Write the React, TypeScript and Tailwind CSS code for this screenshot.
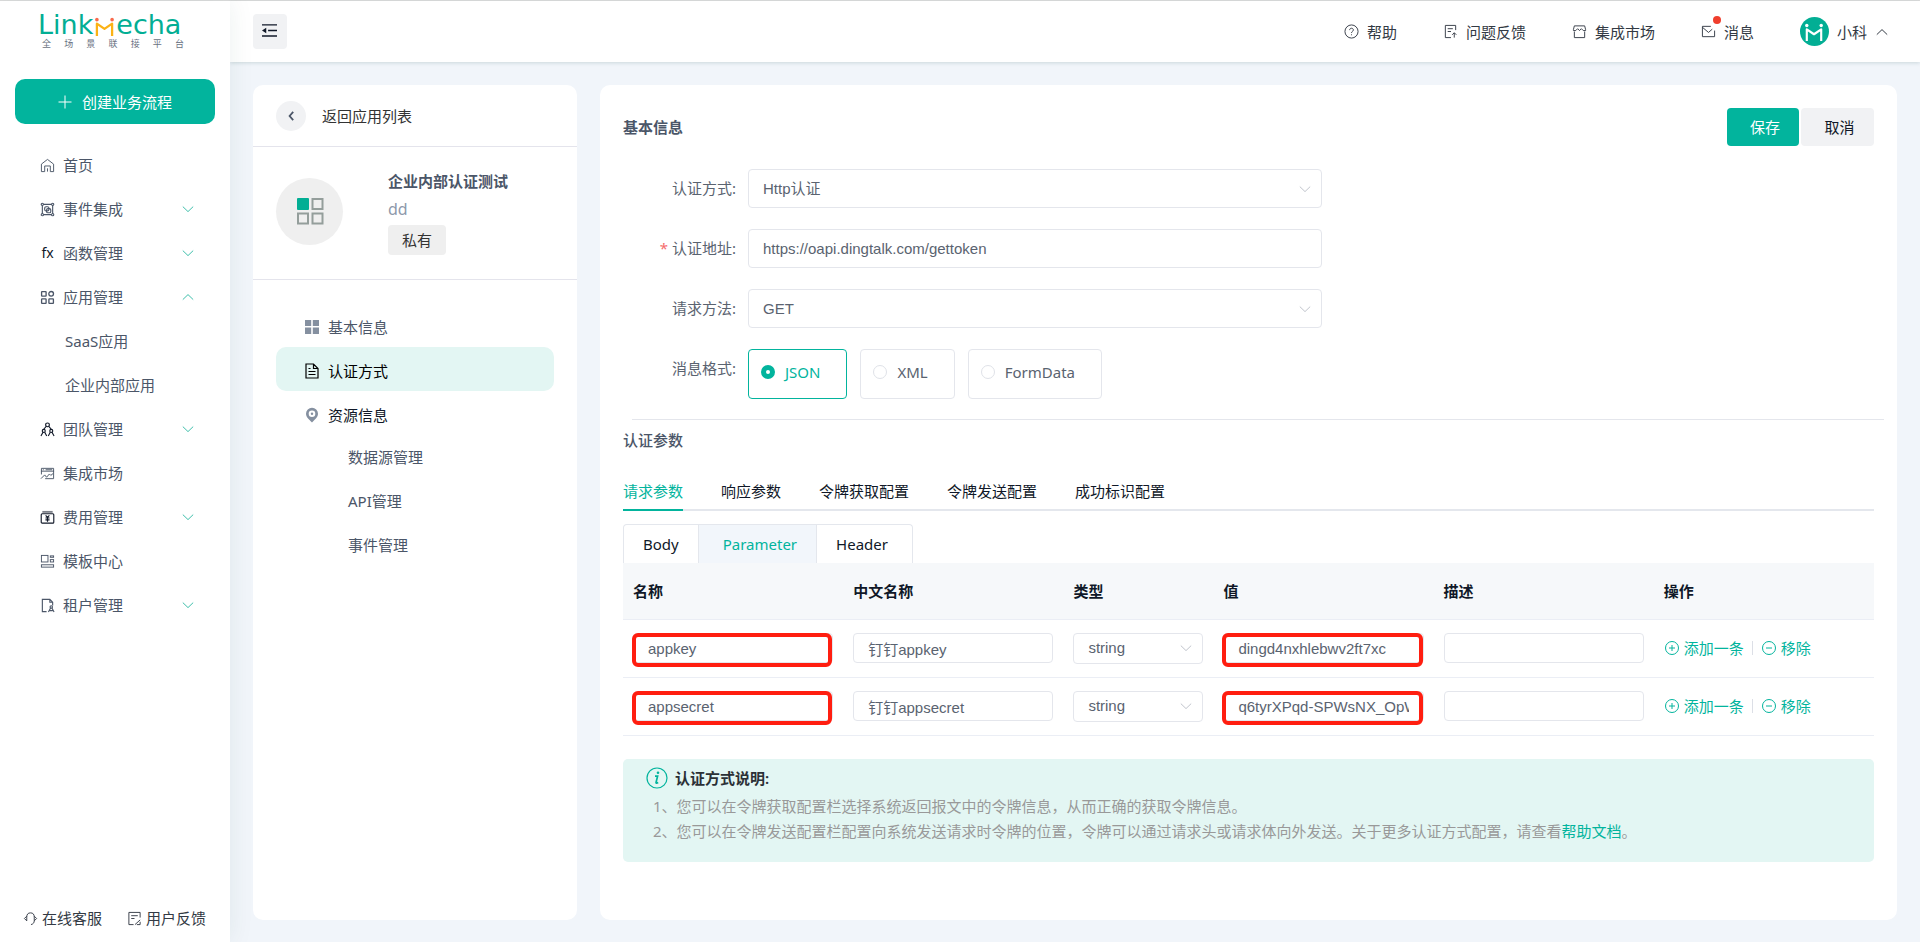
import React, { useState } from 'react';

interface IconProps {
  className?: string;
}

interface MenuItem {
  label: string;
  icon: React.FC<IconProps>;
  state?: 'open' | 'closed';
  dark?: boolean;
  children?: string[];
}

interface ParamRow {
  name: string;
  title: string;
  type: string;
  value: string;
  desc: string;
}

/* ---------- icons ---------- */

const Icon: React.FC<IconProps & { children: React.ReactNode; width?: number }> = ({
  className = 'size-[15px]',
  width = 1,
  children,
}) => (
  <svg viewBox="0 0 16 16" fill="none" stroke="currentColor" strokeWidth={width} className={`shrink-0 ${className}`} aria-hidden="true">
    {children}
  </svg>
);

const Chevron: React.FC<IconProps & { up?: boolean }> = ({ className = 'size-3', up }) => (
  <svg viewBox="0 0 12 12" fill="none" stroke="currentColor" className={`shrink-0 ${className}`} aria-hidden="true">
    <path d={up ? 'M.8 8.6 6 3.6l5.2 5' : 'M.8 3.600l5.200 5 5.200-5'} />
  </svg>
);

const HomeIcon: React.FC<IconProps> = (p) => (
  <Icon {...p}>
    <path d="M1.500 6.500 8 1.500l6.500 5v8h-3.500v-6H5v6H1.500zM8 11v3.500" />
  </Icon>
);

const EventIcon: React.FC<IconProps> = (p) => (
  <Icon {...p} width={1.2}>
    <path d="M2.500 3.500v9M13.500 3.500v9M3.500 2.500h9M3.500 13.500h9" />
    <circle cx="2.500" cy="2.500" r="1.200" />
    <circle cx="13.500" cy="2.500" r="1.200" />
    <circle cx="2.500" cy="13.500" r="1.200" />
    <circle cx="13.500" cy="13.500" r="1.200" />
    <rect x="5" y="5" width="4.500" height="4.500" rx="1.500" />
    <rect x="7" y="7" width="4.500" height="4.500" rx="1.500" />
  </Icon>
);

const FxIcon: React.FC<IconProps> = () => (
  <span className="w-[15px] shrink-0 text-center font-['Noto_Sans',sans-serif] text-sm leading-4 text-gray-900">fx</span>
);

const AppsIcon: React.FC<IconProps> = (p) => (
  <Icon {...p} width={1.4}>
    <rect x="1.700" y="1.700" width="4.800" height="4.800" rx=".5" />
    <rect x="1.700" y="9.500" width="4.800" height="4.800" rx=".5" />
    <rect x="9.500" y="9.500" width="4.800" height="4.800" rx=".5" />
    <circle cx="11.900" cy="4.100" r="2.500" />
  </Icon>
);

const TeamIcon: React.FC<IconProps> = (p) => (
  <Icon {...p} width={1.2}>
    <circle cx="8" cy="3" r="2" />
    <circle cx="4" cy="9.500" r="1.600" />
    <circle cx="12" cy="9.500" r="1.600" />
    <path d="M6.600 4.600 3.800 8M9.400 4.600l2.800 3.400M1 15l2.200-4M7.200 15 5 11M8.800 15l2.200-4M15 15l-2.200-4" />
  </Icon>
);

const MarketIcon: React.FC<IconProps> = (p) => (
  <Icon {...p}>
    <path d="M1.500 9V2.500h13v11h-9M1 5.500h14M3 4h1M6 4h7M1 13.500l4-4 2 2.500 3-3.500 1.500 1.500L14 8" />
  </Icon>
);

const FeeIcon: React.FC<IconProps> = (p) => (
  <Icon {...p} width={1.2}>
    <path d="M2.500 2h11" strokeWidth="2" opacity=".55" />
    <rect x="1.300" y="4" width="13.400" height="10" rx="1" />
    <path d="M6 5.800 8 8l2-2.200M8 8v4.500M5.800 8.500h4.400M5.800 10.500h4.400" />
  </Icon>
);

const TemplateIcon: React.FC<IconProps> = (p) => (
  <Icon {...p}>
    <rect x="1.500" y="1.500" width="7" height="7" />
    <rect x="11" y="2" width="3.500" height="1.500" />
    <rect x="11" y="6" width="3.500" height="2.500" />
    <rect x="1.500" y="11.500" width="13" height="2.500" />
  </Icon>
);

const TenantIcon: React.FC<IconProps> = (p) => (
  <Icon {...p} width={1.2}>
    <path d="M7 14.500H2.500v-13h8l3 3V8M10.500 1.500v3h3" />
    <circle cx="12" cy="9.500" r="1.300" />
    <path d="M9 15l2.300-4.300M15 15l-2.300-4.300M10.500 13.500h3" />
  </Icon>
);

const HeadsetIcon: React.FC<IconProps> = (p) => (
  <Icon {...p}>
    <path d="M4 10.500v-4a4 4.500 0 0 1 8 0v4c0 2-1.200 3.500-3.500 4M4 5.500 1.500 8 4 10.500M12 5.500 14.500 8 12 10.500" />
  </Icon>
);

const FeedbackIcon: React.FC<IconProps> = (p) => (
  <Icon {...p}>
    <path d="M14 7V1.500H2v13h5M4.500 5h7M4.500 8H8M8.500 14.500l5.500-5M10.500 14.500H14v-3" />
  </Icon>
);

const HelpIcon: React.FC<IconProps> = (p) => (
  <Icon {...p}>
    <circle cx="8" cy="8" r="7" />
    <path d="M6 6.500C6 5.300 6.900 4.500 8 4.500s2 .8 2 1.900C10 7.800 8 7.900 8 9.500M8 11v1" />
  </Icon>
);

const IssueIcon: React.FC<IconProps> = (p) => (
  <Icon {...p}>
    <path d="M13.500 6.500v-5h-11v13h6M5 5h5.500M5 8h3.500M12 14.500v-5M9.800 11.500 12 9.300l2.200 2.200" />
  </Icon>
);

const ShopIcon: React.FC<IconProps> = (p) => (
  <Icon {...p}>
    <path d="M2.500 8v6.500h11V8M1.500 6l1-4h11l1 4v1h-2.500l-2-2-2 2-2-2-2 2H1.500z" />
  </Icon>
);

const MailIcon: React.FC<IconProps> = (p) => (
  <Icon {...p}>
    <path d="M10.500 2.500h-9v11h13V7M1.500 3.500 8 9l4-3.500" />
  </Icon>
);

const FoldIcon: React.FC<IconProps> = (p) => (
  <svg viewBox="0 0 18 16" className={p.className} fill="none" stroke="currentColor" strokeWidth="1.500" aria-hidden="true">
    <path d="M1 2h16M7.500 8H17M1 13.800h16" />
    <path d="M1 8l4.500-3v6z" fill="currentColor" stroke="none" />
  </svg>
);

const GridIcon: React.FC<IconProps> = (p) => (
  <svg viewBox="0 0 16 16" fill="#8590a0" className={p.className} aria-hidden="true">
    <path d="M1 1h6.200v6H1zM8.800 1H15v6H8.800zM1 8.600h6.200V15H1zM8.800 8.600H15V15H8.800z" />
  </svg>
);

const DocIcon: React.FC<IconProps> = (p) => (
  <Icon {...p} width={1.2}>
    <path d="M2 1h7.500L14 5.500V15H2zM9.500 1v4.500H14M4.500 5.500h2M4.500 8.500h7M4.500 11.500h7" />
  </Icon>
);

const PinIcon: React.FC<IconProps> = (p) => (
  <svg viewBox="0 0 16 16" className={p.className} aria-hidden="true">
    <path d="M8 15.500C4.500 12 2 9.800 2 6.800a6 6 0 0 1 12 0c0 3-2.500 5.200-6 8.700z" fill="#8590a0" />
    <circle cx="8" cy="6.800" r="3.300" fill="#fff" />
    <circle cx="8" cy="6.800" r="1.200" fill="#8590a0" />
  </svg>
);

/* Brand mark: two figures joining hands */
const BrandMark: React.FC<IconProps & { body: string; head: string }> = ({ className, body, head }) => (
  <svg viewBox="0 0 20 20" className={className} fill="none" aria-hidden="true">
    <path d="M2 20V7l8 5.500L18 7v13" stroke={body} strokeWidth="2.400" strokeLinejoin="round" />
    <circle cx="2" cy="2.800" r="1.900" fill={head} />
    <circle cx="18" cy="2.800" r="1.900" fill={head} />
  </svg>
);

/* ---------- data ---------- */

const menu: MenuItem[] = [
  { label: '首页', icon: HomeIcon },
  { label: '事件集成', icon: EventIcon, state: 'closed' },
  { label: '函数管理', icon: FxIcon, state: 'closed' },
  { label: '应用管理', icon: AppsIcon, state: 'open', children: ['SaaS应用', '企业内部应用'] },
  { label: '团队管理', icon: TeamIcon, state: 'closed', dark: true },
  { label: '集成市场', icon: MarketIcon },
  { label: '费用管理', icon: FeeIcon, state: 'closed', dark: true },
  { label: '模板中心', icon: TemplateIcon },
  { label: '租户管理', icon: TenantIcon, state: 'closed' },
];

const paramTabs = ['请求参数', '响应参数', '令牌获取配置', '令牌发送配置', '成功标识配置'];
const columns = ['名称', '中文名称', '类型', '值', '描述', '操作'];

const initialRows: ParamRow[] = [
  { name: 'appkey', title: '钉钉appkey', type: 'string', value: 'dingd4nxhlebwv2ft7xc', desc: '' },
  { name: 'appsecret', title: '钉钉appsecret', type: 'string', value: 'q6tyrXPqd-SPWsNX_OpW', desc: '' },
];

/* ---------- pieces ---------- */

const Logo = () => (
  <div className="mr-10 ml-[38px] flex flex-col">
    <div className="flex items-end font-['DejaVu_Sans',sans-serif] text-[27px] leading-6 text-[#02ae94]">
      <span>Link</span>
      <BrandMark className="mx-0.5 mb-px size-[19px]" body="#fbb215" head="#f96a4c" />
      <span>echa</span>
    </div>
    <div className="mt-px flex justify-between pr-1.5 pl-1 text-[9px] leading-3 text-gray-500">
      {'全场景联接平台'.split('').map((c) => (
        <span key={c}>{c}</span>
      ))}
    </div>
  </div>
);

const Sidebar = () => (
  <aside className="relative z-10 flex w-[230px] shrink-0 flex-col bg-white pt-3 shadow-[0_0_24px_rgba(0,80,70,0.08)]">
    <Logo />
    <button
      type="button"
      className="mx-[15px] mt-[29px] flex h-[45px] items-center justify-center gap-2.5 rounded-[10px] bg-[#02b49d] text-white"
    >
      <svg viewBox="0 0 14 14" className="size-3.5" stroke="currentColor" aria-hidden="true">
        <path d="M7 .5v13M.5 7h13" />
      </svg>
      创建业务流程
    </button>

    <nav className="mt-[19px] text-[#4b5668]">
      {menu.map((item) => (
        <div key={item.label}>
          <a href="#" className="flex h-11 items-center gap-2 pr-9 pl-10">
            <item.icon className={item.dark ? 'size-[15px] text-gray-900' : 'size-[15px]'} />
            <span className="flex-1">{item.label}</span>
            {item.state && <Chevron up={item.state === 'open'} className="size-3 text-[#3fbfab]" />}
          </a>
          {item.children?.map((child) => (
            <a key={child} href="#" className="flex h-11 items-center pl-[65px]">
              {child}
            </a>
          ))}
        </div>
      ))}
    </nav>

    <div className="mt-auto flex gap-[25px] pb-3 pl-[23px] text-[#333a44]">
      <a href="#" className="flex items-center gap-1">
        <HeadsetIcon />
        在线客服
      </a>
      <a href="#" className="flex items-center gap-1">
        <FeedbackIcon />
        用户反馈
      </a>
    </div>
  </aside>
);

const Header = () => (
  <header className="relative flex h-[61px] shrink-0 items-center bg-white pr-8 pl-[23px] text-[#333a44] shadow-[0_1px_4px_rgba(0,60,60,0.16)]">
    <button type="button" aria-label="收起菜单" className="flex h-[35px] w-[34px] items-center justify-center rounded-sm bg-[#f1f2f4] pr-0.5 pb-0.5 text-gray-900">
      <FoldIcon className="h-[15px] w-[17px]" />
    </button>
    <nav className="ml-auto flex items-center gap-[46px]">
      <a href="#" className="flex items-center gap-2">
        <HelpIcon />
        帮助
      </a>
      <a href="#" className="flex items-center gap-2">
        <IssueIcon />
        问题反馈
      </a>
      <a href="#" className="flex items-center gap-2">
        <ShopIcon />
        集成市场
      </a>
      <a href="#" className="relative flex items-center gap-2">
        <MailIcon />
        消息
        <span className="absolute -top-1 left-3 size-2 rounded-full bg-[#f03e2d]" />
      </a>
      <button type="button" className="flex items-center gap-2">
        <span className="flex size-[29px] items-center justify-center rounded-full bg-[#02ae94]">
          <BrandMark className="size-[18px]" body="#fff" head="#fff" />
        </span>
        小科
        <Chevron up className="ml-px size-3" />
      </button>
    </nav>
  </header>
);

const AppPanel = () => (
  <section className="w-[324px] shrink-0 rounded-[10px] bg-white">
    <div className="flex h-[62px] items-center gap-4 border-b border-[#e4e4ec] px-[23px] text-[#333]">
      <button type="button" aria-label="返回" className="flex size-[30px] items-center justify-center rounded-full bg-[#f1f2f4] text-[#4b5668]">
        <svg viewBox="0 0 10 10" className="size-2.5" fill="none" stroke="currentColor" strokeWidth="1.800" aria-hidden="true">
          <path d="M7.200 .8 3.600 5l3.600 4.200" />
        </svg>
      </button>
      返回应用列表
    </div>

    <div className="flex h-[133px] items-center gap-[45px] border-b border-[#e4e4ec] px-[23px] pb-1">
      <div className="flex size-[67px] items-center justify-center rounded-full bg-[#efefef]">
        <svg viewBox="0 0 28 28" className="size-7" fill="none" stroke="#949e9b" strokeWidth="2" aria-hidden="true">
          <rect x="1" y="1" width="12" height="12" rx="1" fill="#02ae94" stroke="none" />
          <rect x="16.500" y="2" width="10" height="10" />
          <rect x="2" y="16.500" width="10" height="10" />
          <rect x="16.500" y="16.500" width="10" height="10" />
        </svg>
      </div>
      <div className="flex flex-col items-start">
        <h2 className="mb-0.5 leading-7 font-bold text-[#4b5668]">企业内部认证测试</h2>
        <p className="text-base leading-6 text-[#8d99ab]">dd</p>
        <span className="mt-1 flex h-[30px] items-center rounded bg-[#efefef] px-3.5 text-[#333]">私有</span>
      </div>
    </div>

    <nav className="px-[23px] pt-[23px] text-[#4b5668]">
      <a href="#" className="flex h-11 items-center gap-2 pt-1 pl-7">
        <GridIcon className="size-4" />
        基本信息
      </a>
      <a href="#" className="flex h-11 items-center gap-2 rounded-[10px] bg-[#e3f6f3] pt-1 pl-7 text-black">
        <DocIcon className="size-4" />
        认证方式
      </a>
      <a href="#" className="flex h-11 items-center gap-2 pt-1 pl-7 text-gray-900">
        <PinIcon className="size-4" />
        资源信息
      </a>
      {['数据源管理', 'API管理', '事件管理'].map((label) => (
        <a key={label} href="#" className="flex h-11 items-center pl-[72px]">
          {label}
        </a>
      ))}
    </nav>
  </section>
);

const FieldLabel: React.FC<{ htmlFor?: string; required?: boolean; children: React.ReactNode }> = ({ htmlFor, required, children }) => (
  <label htmlFor={htmlFor} className="w-[125px] shrink-0 pr-3 text-right leading-[39px] text-[#5a6370]">
    {required && <span className="mr-1 text-[#f56c6c]">*</span>}
    {children}:
  </label>
);

const controlClass =
  "w-full appearance-none rounded border border-[#e4e6ec] bg-white px-3.5 font-['Liberation_Sans','Noto_Sans_CJK_SC',sans-serif] text-[#5a6370] outline-none";

const SelectBox: React.FC<{ id?: string; label?: string; options: string[]; small?: boolean }> = ({ id, label, options, small }) => (
  <div className="relative w-full">
    <select id={id} aria-label={label} className={`${controlClass} block ${small ? 'h-[31px]' : 'h-[39px]'}`}>
      {options.map((o) => (
        <option key={o}>{o}</option>
      ))}
    </select>
    <Chevron className="pointer-events-none absolute top-1/2 right-[11px] size-3 -translate-y-1/2 text-[#c0c4cc]" />
  </div>
);

const Marked: React.FC<{ children: React.ReactNode }> = ({ children }) => (
  <div className="relative">
    {children}
    <span className="pointer-events-none absolute -left-px right-px top-0 -bottom-1 rounded-md border-4 border-[#ff1e10]" />
  </div>
);

const AuthPanel = () => {
  const [format, setFormat] = useState('JSON');
  const [tab, setTab] = useState('请求参数');
  const [part, setPart] = useState('Parameter');
  const [rows, setRows] = useState<ParamRow[]>(initialRows);

  const update = (i: number, patch: Partial<ParamRow>) => {
    setRows(rows.map((r, n) => (n === i ? { ...r, ...patch } : r)));
  };

  const addRow = (i: number) => {
    const next = [...rows];
    next.splice(i + 1, 0, { name: '', title: '', type: 'string', value: '', desc: '' });
    setRows(next);
  };

  const cellInput = `${controlClass} block h-[30px]`;

  return (
    <section className="min-w-0 flex-1 rounded-[10px] bg-white px-[23px] pt-[23px]">
      <div className="flex items-start justify-between">
        <h2 className="leading-[38px] font-semibold text-[#4b5668]">基本信息</h2>
        <div className="flex gap-0.5">
          <button type="button" className="h-[38px] w-[72px] rounded bg-[#02b49d] pl-1 text-white">保存</button>
          <button type="button" className="h-[38px] w-[73px] rounded bg-[#f1f2f4] pl-1 text-gray-900">取消</button>
        </div>
      </div>

      <form className="mt-[23px] flex w-[699px] max-w-full flex-col gap-[21px]">
        <div className="flex">
          <FieldLabel htmlFor="auth-type">认证方式</FieldLabel>
          <SelectBox id="auth-type" options={['Http认证']} />
        </div>
        <div className="flex">
          <FieldLabel htmlFor="auth-url" required>认证地址</FieldLabel>
          <input id="auth-url" type="text" defaultValue="https://oapi.dingtalk.com/gettoken" className={`${controlClass} h-[39px]`} />
        </div>
        <div className="flex">
          <FieldLabel htmlFor="auth-method">请求方法</FieldLabel>
          <SelectBox id="auth-method" options={['GET', 'POST']} />
        </div>
        <div className="flex" role="radiogroup" aria-label="消息格式">
          <FieldLabel>消息格式</FieldLabel>
          <div className="flex gap-[13px]">
            {['JSON', 'XML', 'FormData'].map((f) => (
              <label
                key={f}
                className={`flex h-[50px] items-center gap-2.5 rounded border pr-[26px] pb-1 pl-3 ${
                  format === f ? 'border-[#02b49d] text-[#02b49d]' : 'border-[#e4e6ec] text-[#5a6370]'
                }`}
              >
                <input
                  type="radio"
                  name="format"
                  checked={format === f}
                  onChange={() => setFormat(f)}
                  className="size-3.5 appearance-none rounded-full border border-[#dfe2e8] bg-white checked:border-5 checked:border-[#02b49d]"
                />
                {f}
              </label>
            ))}
          </div>
        </div>
      </form>

      <hr className="mt-5 -mr-2.5 ml-[9px] border-[#e4e6ec]" />
      <h2 className="mt-2 leading-6 font-medium text-[#4b5668]">认证参数</h2>

      <div className="mt-[27px] flex gap-[38px] border-b-2 border-[#e4e7ed]">
        {paramTabs.map((t) => (
          <button
            key={t}
            type="button"
            onClick={() => setTab(t)}
            className={`-mb-0.5 h-8 border-b-2 pb-1.5 ${tab === t ? 'border-[#02b49d] text-[#02b49d]' : 'border-transparent text-gray-900'}`}
          >
            {t}
          </button>
        ))}
      </div>

      <div className="mt-[13px] flex w-fit rounded-t border border-b-0 border-[#e4e7ed]">
        {['Body', 'Parameter', 'Header'].map((p) => (
          <button
            key={p}
            type="button"
            onClick={() => setPart(p)}
            className={`h-[38px] ${
              part === p ? 'border-x border-[#e4e7ed] bg-[#f2f6fb] pr-[19px] pl-6 text-[#02b49d]' : 'px-[19px] text-gray-900 last:pr-6'
            }`}
          >
            {p}
          </button>
        ))}
      </div>

      <table className="w-full table-fixed border-collapse text-left">
        <thead className="bg-[#f6f8fa]">
          <tr className="h-14 border-b border-[#ebeef5]">
            {columns.map((c) => (
              <th key={c} className={`px-2.5 font-semibold text-gray-900 ${c === '类型' ? 'w-[150px]' : ''}`}>
                {c}
              </th>
            ))}
          </tr>
        </thead>
        <tbody>
          {rows.map((row, i) => (
            <tr key={i} className="h-[58px] border-b border-[#ebeef5]">
              <td className="px-2.5">
                <Marked>
                  <input aria-label="名称" className={cellInput} value={row.name} onChange={(e) => update(i, { name: e.target.value })} />
                </Marked>
              </td>
              <td className="px-2.5">
                <input aria-label="中文名称" className={cellInput} value={row.title} onChange={(e) => update(i, { title: e.target.value })} />
              </td>
              <td className="px-2.5">
                <SelectBox label="类型" options={['string', 'number', 'boolean']} small />
              </td>
              <td className="px-2.5">
                <Marked>
                  <input aria-label="值" className={cellInput} value={row.value} onChange={(e) => update(i, { value: e.target.value })} />
                </Marked>
              </td>
              <td className="px-2.5">
                <input aria-label="描述" className={cellInput} value={row.desc} onChange={(e) => update(i, { desc: e.target.value })} />
              </td>
              <td className="px-2.5">
                <div className="flex items-center gap-2 text-[#02b49d]">
                  <button type="button" onClick={() => addRow(i)} className="flex items-center gap-1">
                    <Icon className="size-4">
                      <circle cx="8" cy="8" r="6.500" />
                      <path d="M8 5v6M5 8h6" />
                    </Icon>
                    添加一条
                  </button>
                  <span className="h-3.5 w-px bg-[#dcdfe6]" />
                  <button type="button" onClick={() => setRows(rows.filter((_, n) => n !== i))} className="flex items-center gap-1">
                    <Icon className="size-4">
                      <circle cx="8" cy="8" r="6.500" />
                      <path d="M5 8h6" />
                    </Icon>
                    移除
                  </button>
                </div>
              </td>
            </tr>
          ))}
        </tbody>
      </table>

      <div className="mt-[23px] rounded-[5px] bg-[#e3f6f3] px-[23px] pt-[7px] pb-[18px] text-[#999]">
        <div className="flex items-center gap-[7px] font-semibold text-[#2b3036]">
          <svg viewBox="0 0 22 22" className="size-[22px]" fill="none" stroke="#02b49d" strokeWidth="1.200" aria-hidden="true">
            <circle cx="11" cy="11" r="10" />
            <path d="M9 9.200h2.600L10 15.600c0 .8.900.6 2.200-.1" strokeWidth="1.700" />
            <circle cx="12" cy="5.800" r="1.300" fill="#02b49d" stroke="none" />
          </svg>
          认证方式说明:
        </div>
        <div className="mt-1 pl-[7px] leading-[25px]">
          <p>1、您可以在令牌获取配置栏选择系统返回报文中的令牌信息，从而正确的获取令牌信息。</p>
          <p>
            2、您可以在令牌发送配置栏配置向系统发送请求时令牌的位置，令牌可以通过请求头或请求体向外发送。关于更多认证方式配置，请查看
            <a href="#" className="text-[#02b49d]">帮助文档</a>。
          </p>
        </div>
      </div>
    </section>
  );
};

const App: React.FC = () => {
  return (
    <div className="flex min-h-screen border-t border-[#dcdcdc] bg-[#f1f5fa] font-['Noto_Sans','Noto_Sans_CJK_SC',sans-serif] text-[15px] leading-6">
      <Sidebar />
      <div className="flex min-w-0 flex-1 flex-col">
        <Header />
        <main className="flex flex-1 gap-[23px] px-[23px] pt-[23px] pb-[22px]">
          <AppPanel />
          <AuthPanel />
        </main>
      </div>
    </div>
  );
};

export default App;
